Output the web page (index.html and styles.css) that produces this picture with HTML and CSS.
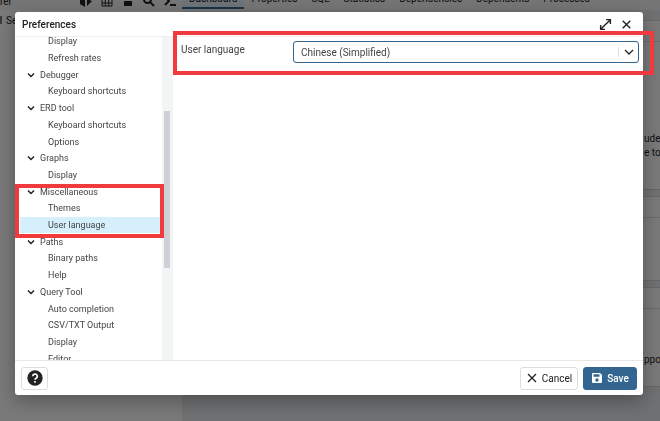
FILE: index.html
```
<!DOCTYPE html>
<html lang="en">

<head>
    <meta charset="UTF-8">
    <meta name="viewport" content="width=device-width, initial-scale=1.0">
    <title>Preferences</title>
    <link rel="stylesheet" href="styles.css">
</head>

<body>
    <div class="app">
        <div class="sidebar">
            <div class="toolbar">
                <span class="name">rer</span>
                <svg class="tool" viewBox="0 0 12 12"><path d="M1 3l5-2 5 2-5 2zM0 5l5-1v8L0 9zM7 4l5 2-5 5z"/></svg>
                <svg class="tool line" viewBox="0 0 12 12"><path d="M1 1h10v10H1zM1 4.500h10M1 8h10M4.300 1v10M7.700 1v10"/></svg>
                <svg class="tool" viewBox="0 0 12 12"><path d="M2 2h8v3H2zM2 6h8v5H2z"/></svg>
                <svg class="tool search" viewBox="0 0 12 12"><circle cx="4.500" cy="4.500" r="3.500"/><path d="M7 7l4 4"/></svg>
                <svg class="tool prompt" viewBox="0 0 12 12"><path d="M1 2l4 4-4 4M6 10h6"/></svg>
            </div>
            <div class="server"><span class="grip"></span>Se</div>
        </div>
        <div class="main">
            <div class="tabs">
                <a href="#" class="active">Dashboard</a>
                <a href="#">Properties</a>
                <a href="#">SQL</a>
                <a href="#">Statistics</a>
                <a href="#">Dependencies</a>
                <a href="#">Dependents</a>
                <a href="#">Processes</a>
            </div>
            <div class="dashboard">
                <div class="card welcome"><div class="head"></div><p>ude<br>e to</p></div>
                <div class="card links"><div class="head"></div></div>
                <div class="card started"><div class="head"></div><p>ppor</p></div>
            </div>
        </div>
    </div>

    <div class="overlay">
        <div class="dialog" role="dialog" aria-labelledby="title">
            <div class="title">
                <h1 id="title">Preferences</h1>
                <button type="button" aria-label="Maximize"><svg viewBox="0 0 12 12"><path d="M2 10L10 2M6.500 1.500h4v4M1.500 6.500v4h4"/></svg></button>
                <button type="button" aria-label="Close"><svg viewBox="0 0 12 12"><path d="M2.500 2.500l7 7M9.500 2.500l-7 7"/></svg></button>
            </div>

            <div class="content">
                <div class="tree">
                    <ul>
                        <li>Display</li>
                        <li>Refresh rates</li>
                        <li class="group"><svg viewBox="0 0 8 8"><path d="M1 2.500l3 3 3-3"/></svg>Debugger</li>
                        <li>Keyboard shortcuts</li>
                        <li class="group"><svg viewBox="0 0 8 8"><path d="M1 2.500l3 3 3-3"/></svg>ERD tool</li>
                        <li>Keyboard shortcuts</li>
                        <li>Options</li>
                        <li class="group"><svg viewBox="0 0 8 8"><path d="M1 2.500l3 3 3-3"/></svg>Graphs</li>
                        <li>Display</li>
                        <li class="group"><svg viewBox="0 0 8 8"><path d="M1 2.500l3 3 3-3"/></svg>Miscellaneous</li>
                        <li>Themes</li>
                        <li class="active">User language</li>
                        <li class="group"><svg viewBox="0 0 8 8"><path d="M1 2.500l3 3 3-3"/></svg>Paths</li>
                        <li>Binary paths</li>
                        <li>Help</li>
                        <li class="group"><svg viewBox="0 0 8 8"><path d="M1 2.500l3 3 3-3"/></svg>Query Tool</li>
                        <li>Auto completion</li>
                        <li>CSV/TXT Output</li>
                        <li>Display</li>
                        <li>Editor</li>
                    </ul>
                    <div class="scroll"><div class="thumb"></div></div>
                    <div class="mark"></div>
                </div>

                <div class="form">
                    <label for="lang">User language</label>
                    <div class="select">
                        <select id="lang">
                            <option>Chinese (Simplified)</option>
                            <option>English</option>
                        </select>
                        <svg viewBox="0 0 10 10"><path d="M1 3l4 4 4-4"/></svg>
                    </div>
                    <div class="mark"></div>
                </div>
            </div>

            <div class="footer">
                <button type="button" class="help" aria-label="Help"><svg viewBox="0 0 16 16"><circle cx="8" cy="8" r="7"/><path d="M5.700 6.300a2.300 2.200 0 1 1 3.400 1.900Q8 8.800 8 9.800M8 11v1.700"/></svg></button>
                <button type="button" class="cancel"><svg viewBox="0 0 12 12"><path d="M2 2l8 8M10 2l-8 8"/></svg>Cancel</button>
                <button type="button" class="save"><svg viewBox="0 0 12 12"><path fill-rule="evenodd" d="M2 1h7l2 2v7a1 1 0 0 1-1 1H2a1 1 0 0 1-1-1V2a1 1 0 0 1 1-1zM2.500 2.300v2.500h6V2.300zM6 6.300a1.700 1.700 0 1 0 0 3.400 1.700 1.700 0 0 0 0-3.400z"/></svg>Save</button>
            </div>
        </div>
    </div>
</body>

</html>
```
FILE: styles.css
```
* {
    margin: 0;
    padding: 0;
    box-sizing: border-box;
}

body {
    height: 100vh;
    overflow: hidden;
    background-color: #dde0e3;
    color: #222;
    font-family: Roboto, "Liberation Sans", sans-serif;
    font-size: 10px;
}

svg {
    display: block;
    fill: none;
    stroke: #222;
}

.app {
    display: flex;
    height: 100%;
}

.sidebar {
    width: 182px;
    flex: none;
    background-color: #f2f2f2;
}

.toolbar {
    display: flex;
    align-items: center;
    gap: 9px;
    height: 18px;
    margin-top: -8px;
    background-color: #ebebeb;
}

.toolbar .name {
    width: 71px;
}

.tool {
    width: 12px;
    height: 12px;
    fill: #222;
    stroke: none;
}

.tool.line,
.tool.search,
.tool.prompt {
    fill: none;
    stroke: #222;
}

.tool.search,
.tool.prompt {
    stroke-width: 2;
}

.server {
    display: flex;
    align-items: center;
    gap: 4px;
    height: 20px;
}

.grip {
    width: 2px;
    height: 8px;
    background-color: #777;
}

.main {
    flex: 1;
    min-width: 0;
}

.tabs {
    display: flex;
    height: 18px;
    margin-top: -8px;
    background-color: #ebebeb;
}

.tabs a {
    padding: 0 7px;
    line-height: 14px;
    color: #222;
    text-decoration: none;
}

.tabs .active {
    height: 17px;
    border-bottom: 2px solid #326690;
    background-color: #dce6ee;
}

.dashboard {
    padding-top: 10px;
    white-space: nowrap;
}

.card {
    margin-bottom: 6px;
    border-top: 1px solid #ccc;
    border-bottom: 1px solid #ccc;
    background-color: #f2f2f2;
}

.card .head {
    height: 21px;
    border-bottom: 1px solid #d4d4d4;
}

.card p {
    padding-left: 462px;
    line-height: 14px;
}

.welcome {
    height: 170px;
}

.welcome p {
    padding-top: 90px;
}

.links {
    height: 85px;
}

.started {
    height: 100px;
}

.started p {
    padding-top: 44px;
}

.overlay {
    position: fixed;
    inset: 0;
    padding: 12px 17px 26px 15px;
    background-color: rgba(0, 0, 0, 0.5);
}

.dialog {
    display: flex;
    flex-direction: column;
    height: 100%;
    border-radius: 3px;
    background-color: #fff;
    box-shadow: 0 6px 18px rgba(0, 0, 0, 0.3);
}

button {
    display: flex;
    align-items: center;
    border: none;
    background: none;
    font: inherit;
    color: #222;
}

.title {
    display: flex;
    align-items: center;
    gap: 8px;
    height: 25px;
    padding: 0 10px 0 7px;
    border-bottom: 1px solid #eee;
}

.title h1 {
    flex: 1;
    font-size: 10px;
    font-weight: 500;
}

.title svg {
    width: 13px;
    height: 13px;
    stroke-width: 1.3;
}

.content {
    display: flex;
    flex: 1;
    min-height: 0;
}

.tree {
    position: relative;
    display: flex;
    width: 158px;
    overflow: hidden;
}

.tree ul {
    flex: 1;
    display: grid;
    grid-auto-rows: 1fr;
    height: 334px;
    margin-top: -4px;
    padding-left: 5px;
    list-style: none;
    font-size: 9px;
    color: #444;
}

.tree li {
    display: flex;
    align-items: center;
    padding-left: 28px;
}

.tree .group {
    gap: 5px;
    padding-left: 7px;
}

.tree .active {
    background-color: #d6effc;
}

.tree li svg {
    width: 8px;
    height: 8px;
    stroke-width: 1.5;
}

.scroll {
    width: 11px;
    padding: 74px 3px 0 2px;
    background-color: #f3f4f5;
}

.thumb {
    height: 157px;
    background-color: #cdd0d4;
}

.mark {
    position: absolute;
    border: 4px solid #f03a3e;
    pointer-events: none;
}

.tree .mark {
    top: 147px;
    left: 0;
    width: 149px;
    height: 54px;
}

.form {
    position: relative;
    flex: 1;
    display: grid;
    grid-template-columns: 104px 1fr;
    gap: 8px;
    align-content: start;
    padding: 4px 4px 0 8px;
    color: #444;
}

.form label {
    padding-top: 3px;
}

.form .mark {
    top: -6px;
    right: -11px;
    left: 0;
    height: 44px;
}

.select {
    position: relative;
}

.select select {
    display: block;
    width: 100%;
    height: 22px;
    padding: 0 7px;
    appearance: none;
    border: 1px solid #326690;
    border-radius: 3px;
    background-color: #fff;
    font: inherit;
    color: #444;
}

.select svg {
    position: absolute;
    top: 6px;
    right: 0;
    width: 21px;
    height: 10px;
    border-left: 1px solid #ddd;
    stroke-width: 1.3;
}

.footer {
    display: flex;
    align-items: center;
    gap: 5px;
    height: 35px;
    padding: 0 6px;
    border-top: 1px solid #e8e8e8;
}

.footer button {
    justify-content: center;
    gap: 4px;
    height: 23px;
    border: 1px solid #ddd;
    border-radius: 3px;
}

.footer svg {
    width: 12px;
    height: 12px;
    stroke-width: 1.3;
}

.footer .help {
    width: 27px;
    margin-right: auto;
}

.footer .help svg {
    width: 16px;
    height: 16px;
}

.help circle {
    fill: #222;
}

.help path {
    stroke: #fff;
    stroke-width: 1.6;
}

.footer .cancel {
    width: 58px;
}

.footer .save {
    width: 54px;
    border-color: #326690;
    background-color: #326690;
    font-weight: 500;
    color: #fff;
}

.save svg {
    fill: #fff;
    stroke: none;
}
```
